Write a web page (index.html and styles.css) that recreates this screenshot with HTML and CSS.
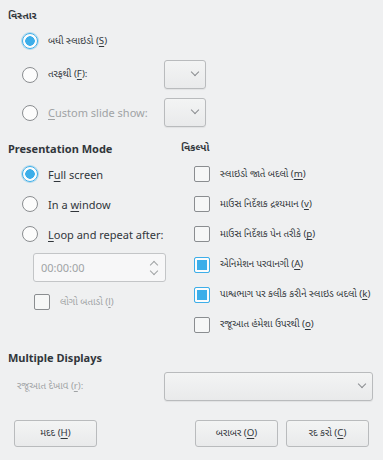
FILE: index.html
```html
<!DOCTYPE html>
<html lang="gu">
<head>
    <meta charset="UTF-8">
    <title>Presentation Settings</title>
    <link rel="stylesheet" href="styles.css">
</head>
<body>
    <div class="dialog">
        <!-- Range -->
        <h2 class="title gu">વિસ્તાર</h2>
        <div class="range">
            <div class="row row-first">
                <span class="radio checked"></span>
                <span class="label gu">બધી સ્લાઇડો (<u>S</u>)</span>
            </div>
            <div class="row">
                <span class="radio"></span>
                <span class="label gu">તરફથી (<u>F</u>):</span>
                <span class="combo small"><span class="chev"></span></span>
            </div>
            <div class="row">
                <span class="radio"></span>
                <span class="label dim"><u>C</u>ustom slide show:</span>
                <span class="combo small"><span class="chev"></span></span>
            </div>
        </div>

        <!-- Mode + options -->
        <div class="columns">
            <div class="col-left">
                <h2 class="title">Presentation Mode</h2>
                <div class="opt">
                    <span class="radio checked"></span>
                    <span class="label">F<u>u</u>ll screen</span>
                </div>
                <div class="opt">
                    <span class="radio"></span>
                    <span class="label">In a <u>w</u>indow</span>
                </div>
                <div class="opt">
                    <span class="radio"></span>
                    <span class="label"><u>L</u>oop and repeat after:</span>
                </div>
                <div class="timebox">
                    <span class="time">00:00:00</span>
                    <span class="spin"></span>
                </div>
                <div class="opt logo">
                    <span class="check"></span>
                    <span class="label gu dim">લોગો બતાડો (<u>l</u>)</span>
                </div>
            </div>
            <div class="col-right">
                <h2 class="title gu">વિકલ્પો</h2>
                <div class="opt">
                    <span class="check"></span>
                    <span class="label gu">સ્લાઇડો જાતે બદલો (<u>m</u>)</span>
                </div>
                <div class="opt">
                    <span class="check"></span>
                    <span class="label gu">માઉસ નિર્દેશક દ્રશ્યમાન (<u>v</u>)</span>
                </div>
                <div class="opt">
                    <span class="check"></span>
                    <span class="label gu">માઉસ નિર્દેશક પેન તરીકે (<u>p</u>)</span>
                </div>
                <div class="opt">
                    <span class="check checked"></span>
                    <span class="label gu">એનિમેશન પરવાનગી (<u>A</u>)</span>
                </div>
                <div class="opt">
                    <span class="check checked"></span>
                    <span class="label gu">પાશ્વભાગ પર કલીક કરીને સ્લાઇડ બદલો (<u>k</u>)</span>
                </div>
                <div class="opt">
                    <span class="check"></span>
                    <span class="label gu">રજૂઆત હંમેશા ઉપરથી (<u>o</u>)</span>
                </div>
            </div>
        </div>

        <!-- Displays -->
        <h2 class="title displays-title">Multiple Displays</h2>
        <div class="display-row">
            <span class="label gu dim">રજૂઆત દેખાવ (<u>r</u>):</span>
            <span class="combo wide"><span class="chev"></span></span>
        </div>

        <!-- Buttons -->
        <div class="buttons">
            <button class="gu">મદદ (<u>H</u>)</button>
            <span class="spacer"></span>
            <button class="gu">બરાબર (<u>O</u>)</button>
            <button class="gu">રદ કરો (<u>C</u>)</button>
        </div>
    </div>
</body>
</html>
```

FILE: styles.css
```css
html, body {
    margin: 0;
    padding: 0;
    background-color: #eff0f1;
    color: #31363b;
    font-family: "Noto Sans", "DejaVu Sans", sans-serif;
    font-size: 11px;
}
.dialog {
    width: 383px;
    height: 460px;
    box-sizing: border-box;
    padding: 10px 8px 0 8px;
}
.title {
    margin: 0;
    font-size: 11px;
    font-weight: bold;
    line-height: 14px;
}
.gu {
    font-family: "Noto Sans Gujarati", "Noto Sans", sans-serif;
    font-size: 9.7px;
}
.title.gu {
    font-size: 10px;
}
.label {
    white-space: nowrap;
}
.dim {
    color: #a0a3a5;
}
u {
    text-decoration-thickness: 1px;
    text-underline-offset: 2px;
}

/* radio + checkbox */
.radio {
    width: 16px;
    height: 16px;
    box-sizing: border-box;
    border: 1px solid #8a8d90;
    border-radius: 50%;
    background: #fcfcfc;
    flex: none;
}
.radio.checked {
    border-color: #3daee9;
    background: radial-gradient(circle, #3daee9 0 4.5px, #fcfcfc 5px);
    box-shadow: 0 0 0 1px rgba(61, 174, 233, 0.35);
}
.check {
    width: 16px;
    height: 16px;
    box-sizing: border-box;
    border: 1px solid #8a8d90;
    border-radius: 2px;
    background: #f6f7f7;
    flex: none;
}
.check.checked {
    border-color: #3daee9;
    background: #fcfcfc;
    box-shadow: inset 0 0 0 2px #fcfcfc, inset 0 0 0 8px #3daee9;
}

/* range section */
.range {
    padding-left: 14px;
    margin-top: 9px;
}
.range .row {
    display: flex;
    align-items: center;
    height: 29px;
    margin-top: 9px;
}
.range .row-first {
    height: 16px;
    margin-top: 0;
}
.range .row-first + .row {
    margin-top: 11px;
}
.range .row .label {
    margin-left: 10px;
    width: 116px;
}

.combo {
    position: relative;
    box-sizing: border-box;
    height: 29px;
    border: 1px solid #b9bbbd;
    border-radius: 3px;
    background: linear-gradient(#f3f4f4, #e9eaeb);
    box-shadow: 0 1px 1px rgba(0, 0, 0, 0.06);
}
.combo.small {
    width: 42px;
}
.combo.wide {
    width: 209px;
}
.chev {
    position: absolute;
    right: 7px;
    top: 8px;
    width: 5px;
    height: 5px;
    border-right: 1px solid #8a8d90;
    border-bottom: 1px solid #8a8d90;
    transform: rotate(45deg);
}

/* two columns */
.columns {
    display: grid;
    grid-template-columns: 173px 1fr;
    margin-top: 15px;
}
.opt {
    display: flex;
    align-items: center;
    height: 16px;
    margin-top: 14px;
    padding-left: 14px;
}
.opt .label {
    margin-left: 10px;
}
.title + .opt {
    margin-top: 10px;
}
.col-right .opt {
    padding-left: 13px;
    margin-top: 14.2px;
}
.col-right .title + .opt {
    margin-top: 10px;
}
.timebox {
    display: flex;
    align-items: center;
    justify-content: space-between;
    box-sizing: border-box;
    width: 133px;
    height: 29px;
    margin: 11px 0 0 25px;
    padding: 0 6px 0 7px;
    border: 1px solid #c3c5c7;
    border-radius: 3px;
    background: #f7f7f8;
}
.time {
    color: #a0a3a5;
    font-size: 11px;
}
.spin {
    position: relative;
    width: 10px;
    height: 18px;
}
.spin::before, .spin::after {
    content: "";
    position: absolute;
    left: 2px;
    width: 5px;
    height: 5px;
    border-left: 1px solid #a0a3a5;
    border-top: 1px solid #a0a3a5;
}
.spin::before {
    top: 3px;
    transform: rotate(45deg);
}
.spin::after {
    top: 9px;
    transform: rotate(225deg);
}
.opt.logo {
    padding-left: 26px;
    margin-top: 12px;
}

/* displays */
.displays-title {
    margin-top: 18px;
}
.display-row {
    display: flex;
    align-items: center;
    justify-content: space-between;
    margin: 7px 2px 0 0;
    padding-left: 9px;
}

/* buttons */
.buttons {
    display: flex;
    gap: 8px;
    margin-top: 19px;
    padding: 0 6px;
}
.spacer {
    flex: 1;
}
button {
    width: 83px;
    height: 27px;
    box-sizing: border-box;
    border: 1px solid #b9bbbd;
    border-radius: 3px;
    background: linear-gradient(#f3f4f4, #e9eaeb);
    color: #31363b;
    padding: 0;
}
```
